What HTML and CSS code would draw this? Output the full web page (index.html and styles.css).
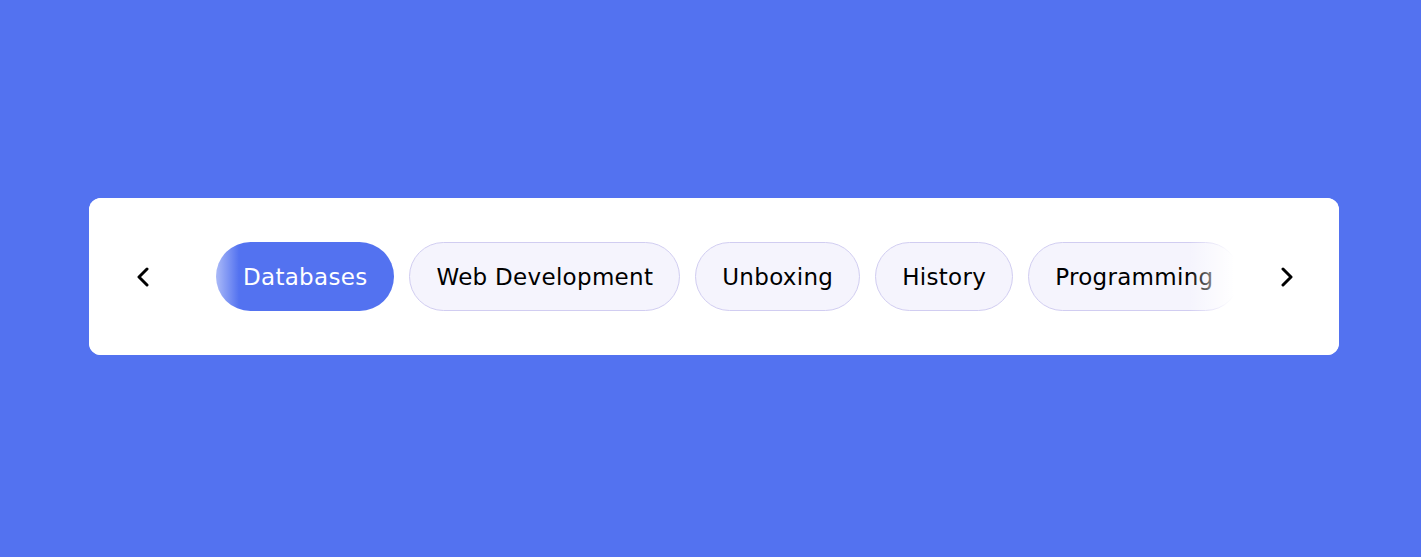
FILE: index.html
```html
<!DOCTYPE html>
<html lang="en">
<head>
<meta charset="utf-8">
<title>Tabs</title>
<link rel="stylesheet" href="styles.css">
</head>
<body>
<div class="wrapper">
  <div class="icon icon-left">
    <span class="arrow">
      <svg width="14" height="20" viewBox="0 0 14 20"><polyline points="11,2 3,10 11,18" fill="none" stroke="#000" stroke-width="3" stroke-linecap="round" stroke-linejoin="round"/></svg>
    </span>
  </div>
  <ul class="tabs">
    <li class="tab active">Databases</li>
    <li class="tab">Web Development</li>
    <li class="tab">Unboxing</li>
    <li class="tab">History</li>
    <li class="tab">Programming</li>
  </ul>
  <div class="icon icon-right">
    <span class="arrow">
      <svg width="14" height="20" viewBox="0 0 14 20"><polyline points="3,2 11,10 3,18" fill="none" stroke="#000" stroke-width="3" stroke-linecap="round" stroke-linejoin="round"/></svg>
    </span>
  </div>
</div>
</body>
</html>
```
FILE: styles.css
```css
* { box-sizing: border-box; margin: 0; padding: 0; }
html, body { height: 100%; }
body {
  background: #5372F0;
  display: flex;
  align-items: flex-start;
  padding: 198px 0 0 89px;
  font-family: "DejaVu Sans", sans-serif;
}
.wrapper {
  position: relative;
  width: 1250px;
  height: 157px;
  padding: 44px 0;
  background: #fff;
  border-radius: 12px;
  overflow: hidden;
}
.tabs {
  list-style: none;
  display: flex;
  gap: 15px;
  margin-left: 127px;
  overflow: hidden;
}
.tab {
  flex: none;
  height: 69px;
  display: flex;
  align-items: center;
  padding: 0 26px;
  font-size: 23px;
  letter-spacing: 0.3px;
  color: #000;
  white-space: nowrap;
  background: #f5f4fd;
  border: 1px solid #d1cdf1;
  border-radius: 35px;
}
.tab.active {
  color: #fff;
  background: #5372F0;
  border-color: transparent;
}
.icon {
  position: absolute;
  top: 0;
  height: 100%;
  width: 150px;
  display: flex;
  align-items: center;
  z-index: 2;
}
.icon-left {
  left: 0;
  padding-left: 26px;
  background: linear-gradient(90deg, #fff 70%, rgba(255,255,255,0));
}
.icon-right {
  right: 0;
  justify-content: flex-end;
  padding-right: 25px;
  background: linear-gradient(-90deg, #fff 70%, rgba(255,255,255,0));
}
.arrow {
  width: 55px;
  height: 55px;
  display: flex;
  align-items: center;
  justify-content: center;
}
.arrow svg { display: block; }
```
